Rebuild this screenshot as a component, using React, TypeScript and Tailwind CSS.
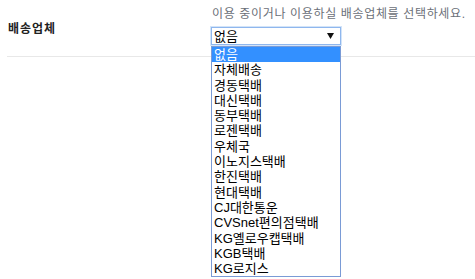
import React from "react";

const items = [
  "없음",
  "자체배송",
  "경동택배",
  "대신택배",
  "동부택배",
  "로젠택배",
  "우체국",
  "이노지스택배",
  "한진택배",
  "현대택배",
  "CJ대한통운",
  "CVSnet편의점택배",
  "KG옐로우캡택배",
  "KGB택배",
  "KG로지스",
];

export default function App() {
  return (
    <div
      className="w-[475px] h-[279px] bg-white overflow-hidden pl-[7px]"
      style={{ fontFamily: '"Liberation Sans", "Noto Sans CJK KR", sans-serif' }}
    >
      <div className="flex h-[57px] border-b border-[#e8e8e8]">
        <div className="w-[204px] flex items-center pl-[1px] pt-[1px] text-[12px] font-bold text-[#222] tracking-[1px]">
          배송업체
        </div>
        <div className="pt-[6px]">
          <div className="text-[12px] leading-[16px] text-[#6b6f78] pl-[1px] tracking-[0.65px]">
            이용 중이거나 이용하실 배송업체를 선택하세요.
          </div>
          <div className="relative mt-[5px] w-[130px]">
            <div className="h-[18px] flex items-center justify-between border border-[#8fb7ee] shadow-[0_0_0_1px_#d3e4f8] bg-white pl-[2px] pr-[6px] text-[13px] text-black leading-none">
              <span>없음</span>
              <svg width="7" height="6" viewBox="0 0 7 6">
                <polygon points="0,0 7,0 3.5,6" fill="#111" />
              </svg>
            </div>
            <div className="absolute left-0 top-[19px] w-[130px] border border-[#7a9bd6] bg-white">
              {items.map((it, i) => (
                <div
                  key={it}
                  className={
                    i === 0
                      ? "h-[15.3px] leading-[15.3px] pl-[2px] text-[13px] bg-[#3390ff] text-white whitespace-nowrap"
                      : "h-[15.3px] leading-[15.3px] pl-[2px] text-[13px] text-black whitespace-nowrap"
                  }
                >
                  {it}
                </div>
              ))}
            </div>
          </div>
        </div>
      </div>
    </div>
  );
}
